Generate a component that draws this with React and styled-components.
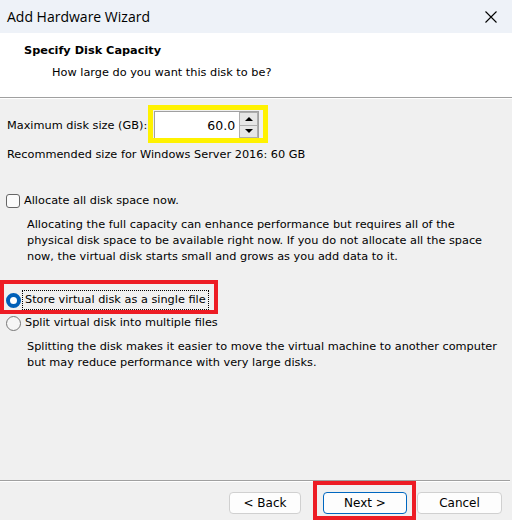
import React from "react";
import styled, { createGlobalStyle, css } from "styled-components";

const Global = createGlobalStyle`
  html, body { margin: 0; padding: 0; background: #f0f0f0; }
  body { width: 512px; height: 520px; overflow: hidden; }
`;

const Window = styled.div`
  width: 512px;
  height: 520px;
  display: flex;
  flex-direction: column;
  background: #f0f0f0;
  font-family: "DejaVu Sans", Tahoma, sans-serif;
  font-size: 11.3px;
  color: #000;
  overflow: hidden;
`;

const TitleBar = styled.div`
  height: 33px;
  flex: none;
  background: #eef2f8;
  display: flex;
  align-items: center;
  justify-content: space-between;
  padding: 0 15px 0 7px;
  font-family: "Open Sans", "Noto Sans", sans-serif;
  font-size: 14px;
  box-sizing: border-box;
`;

const Header = styled.div`
  height: 64px;
  flex: none;
  background: #fff;
  box-sizing: border-box;
  padding: 10px 0 0 24px;
  display: flex;
  flex-direction: column;
`;

const HeaderTitle = styled.div`
  font-weight: bold;
  line-height: 16px;
`;

const HeaderSub = styled.div`
  margin: 6px 0 0 28px;
  line-height: 16px;
`;

const Separator = styled.div`
  flex: none;
  height: 0;
  border-top: 1px solid #a0a0a0;
  border-bottom: 1px solid #ffffff;
  margin-right: ${(p) => p.$inset || 0}px;
`;

const Body = styled.div`
  flex: 1;
  display: flex;
  flex-direction: column;
  padding: 0 0 0 7px;
`;

const SizeRow = styled.div`
  display: flex;
  align-items: center;
  margin-top: 12px;
  height: 28px;
`;

const Highlight = styled.div`
  position: relative;
  &::after {
    content: "";
    position: absolute;
    top: ${(p) => p.$t}px;
    left: ${(p) => p.$l}px;
    right: ${(p) => p.$r}px;
    bottom: ${(p) => p.$b}px;
    border: ${(p) => p.$w}px solid ${(p) => p.$color};
    pointer-events: none;
  }
`;

const Spin = styled.div`
  display: flex;
  width: 105px;
  height: 28px;
  margin-left: 7px;
  box-sizing: border-box;
  border: 1px solid #a0a0a0;
  border-bottom-color: #6e6e6e;
  background: #fff;
`;

const SpinInput = styled.div`
  flex: 1;
  display: flex;
  align-items: center;
  justify-content: flex-end;
  padding-right: 4px;
  font-size: 12.5px;
`;

const SpinButtons = styled.div`
  width: 19px;
  display: flex;
  flex-direction: column;
`;

const SpinButton = styled.div`
  flex: 1;
  background: #e6e6e6;
  border: 1px solid #adadad;
  display: flex;
  align-items: center;
  justify-content: center;
  & + & { border-top: none; }
`;

const Arrow = styled.div`
  width: 0;
  height: 0;
  border-left: 4px solid transparent;
  border-right: 4px solid transparent;
  ${(p) =>
    p.$up
      ? css`border-bottom: 4px solid #000;`
      : css`border-top: 4px solid #000;`}
`;

const Line = styled.div`
  line-height: 16px;
  margin-top: ${(p) => p.$mt || 0}px;
  white-space: nowrap;
`;

const OptionRow = styled.div`
  display: flex;
  align-items: center;
  height: 20px;
  margin-top: ${(p) => p.$mt || 0}px;
`;

const CheckBox = styled.div`
  width: 12px;
  height: 12px;
  border: 1.5px solid #666;
  border-radius: 3px;
  background: #fbfbfb;
  margin: 0 3px 0 -1px;
  flex: none;
`;

const Radio = styled.div`
  width: 15px;
  height: 15px;
  box-sizing: border-box;
  border-radius: 50%;
  flex: none;
  margin: 0 3px 0 -1px;
  ${(p) =>
    p.$checked
      ? css`
          background: #fff;
          border: 4.5px solid #005fb8;
        `
      : css`
          background: #f6f6f6;
          border: 1px solid #777;
        `}
`;

const Label = styled.span`
  line-height: 16px;
  padding: 0 1px;
  ${(p) => p.$focus && css`outline: 1px dotted #000; outline-offset: 1px;`}
`;

const Para = styled.div`
  margin: ${(p) => p.$mt || 0}px 0 0 20px;
  line-height: 16px;
  white-space: nowrap;
`;

const Footer = styled.div`
  flex: none;
  height: 38px;
  display: flex;
  align-items: flex-start;
  justify-content: flex-end;
  padding: 10px 10px 0 0;
  box-sizing: border-box;
`;

const Button = styled.div`
  height: 22px;
  width: ${(p) => p.$w}px;
  margin-left: ${(p) => p.$ml}px;
  box-sizing: border-box;
  background: #fdfdfd;
  border: 1px solid ${(p) => (p.$default ? "#0067c0" : "#d0d0d0")};
  border-radius: 4px;
  display: flex;
  align-items: center;
  justify-content: center;
  font-size: 12px;
`;

const Close = () => (
  <svg width="12" height="12" viewBox="0 0 12 12">
    <path d="M0.5 0.5 L11.5 11.5 M11.5 0.5 L0.5 11.5" stroke="#000" strokeWidth="1.1" />
  </svg>
);

export default function App() {
  return (
    <>
      <Global />
      <Window>
        <TitleBar>
          <span>Add Hardware Wizard</span>
          <Close />
        </TitleBar>
        <Header>
          <HeaderTitle>Specify Disk Capacity</HeaderTitle>
          <HeaderSub>How large do you want this disk to be?</HeaderSub>
        </Header>
        <Separator />
        <Body>
          <SizeRow>
            <span>Maximum disk size (GB):</span>
            <Highlight $t={-6} $l={1} $r={-9} $b={-4} $w={5} $color="#fff200">
              <Spin>
                <SpinInput>60.0</SpinInput>
                <SpinButtons>
                  <SpinButton><Arrow $up /></SpinButton>
                  <SpinButton><Arrow /></SpinButton>
                </SpinButtons>
              </Spin>
            </Highlight>
          </SizeRow>
          <Line $mt={8}>Recommended size for Windows Server 2016: 60 GB</Line>
          <OptionRow $mt={28}>
            <CheckBox />
            <Label>Allocate all disk space now.</Label>
          </OptionRow>
          <Para $mt={6}>
            <div>Allocating the full capacity can enhance performance but requires all of the</div>
            <div>physical disk space to be available right now. If you do not allocate all the space</div>
            <div>now, the virtual disk starts small and grows as you add data to it.</div>
          </Para>
          <Highlight $t={-10} $l={-7} $r={294} $b={-4} $w={4} $color="#ed1c24" style={{ marginTop: 25 }}>
            <OptionRow>
              <Radio $checked />
              <Label $focus>Store virtual disk as a single file</Label>
            </OptionRow>
          </Highlight>
          <OptionRow $mt={3}>
            <Radio />
            <Label>Split virtual disk into multiple files</Label>
          </OptionRow>
          <Para $mt={6}>
            <div>Splitting the disk makes it easier to move the virtual machine to another computer</div>
            <div>but may reduce performance with very large disks.</div>
          </Para>
        </Body>
        <Separator $inset={2} />
        <Footer>
          <Button $w={72} $ml={0}>&lt; Back</Button>
          <Highlight $t={-11} $l={-10} $r={-9} $b={-6} $w={4} $color="#ed1c24" style={{ marginLeft: 22 }}>
            <Button $w={84} $ml={0} $default>Next &gt;</Button>
          </Highlight>
          <Button $w={85} $ml={10}>Cancel</Button>
        </Footer>
      </Window>
    </>
  );
}
